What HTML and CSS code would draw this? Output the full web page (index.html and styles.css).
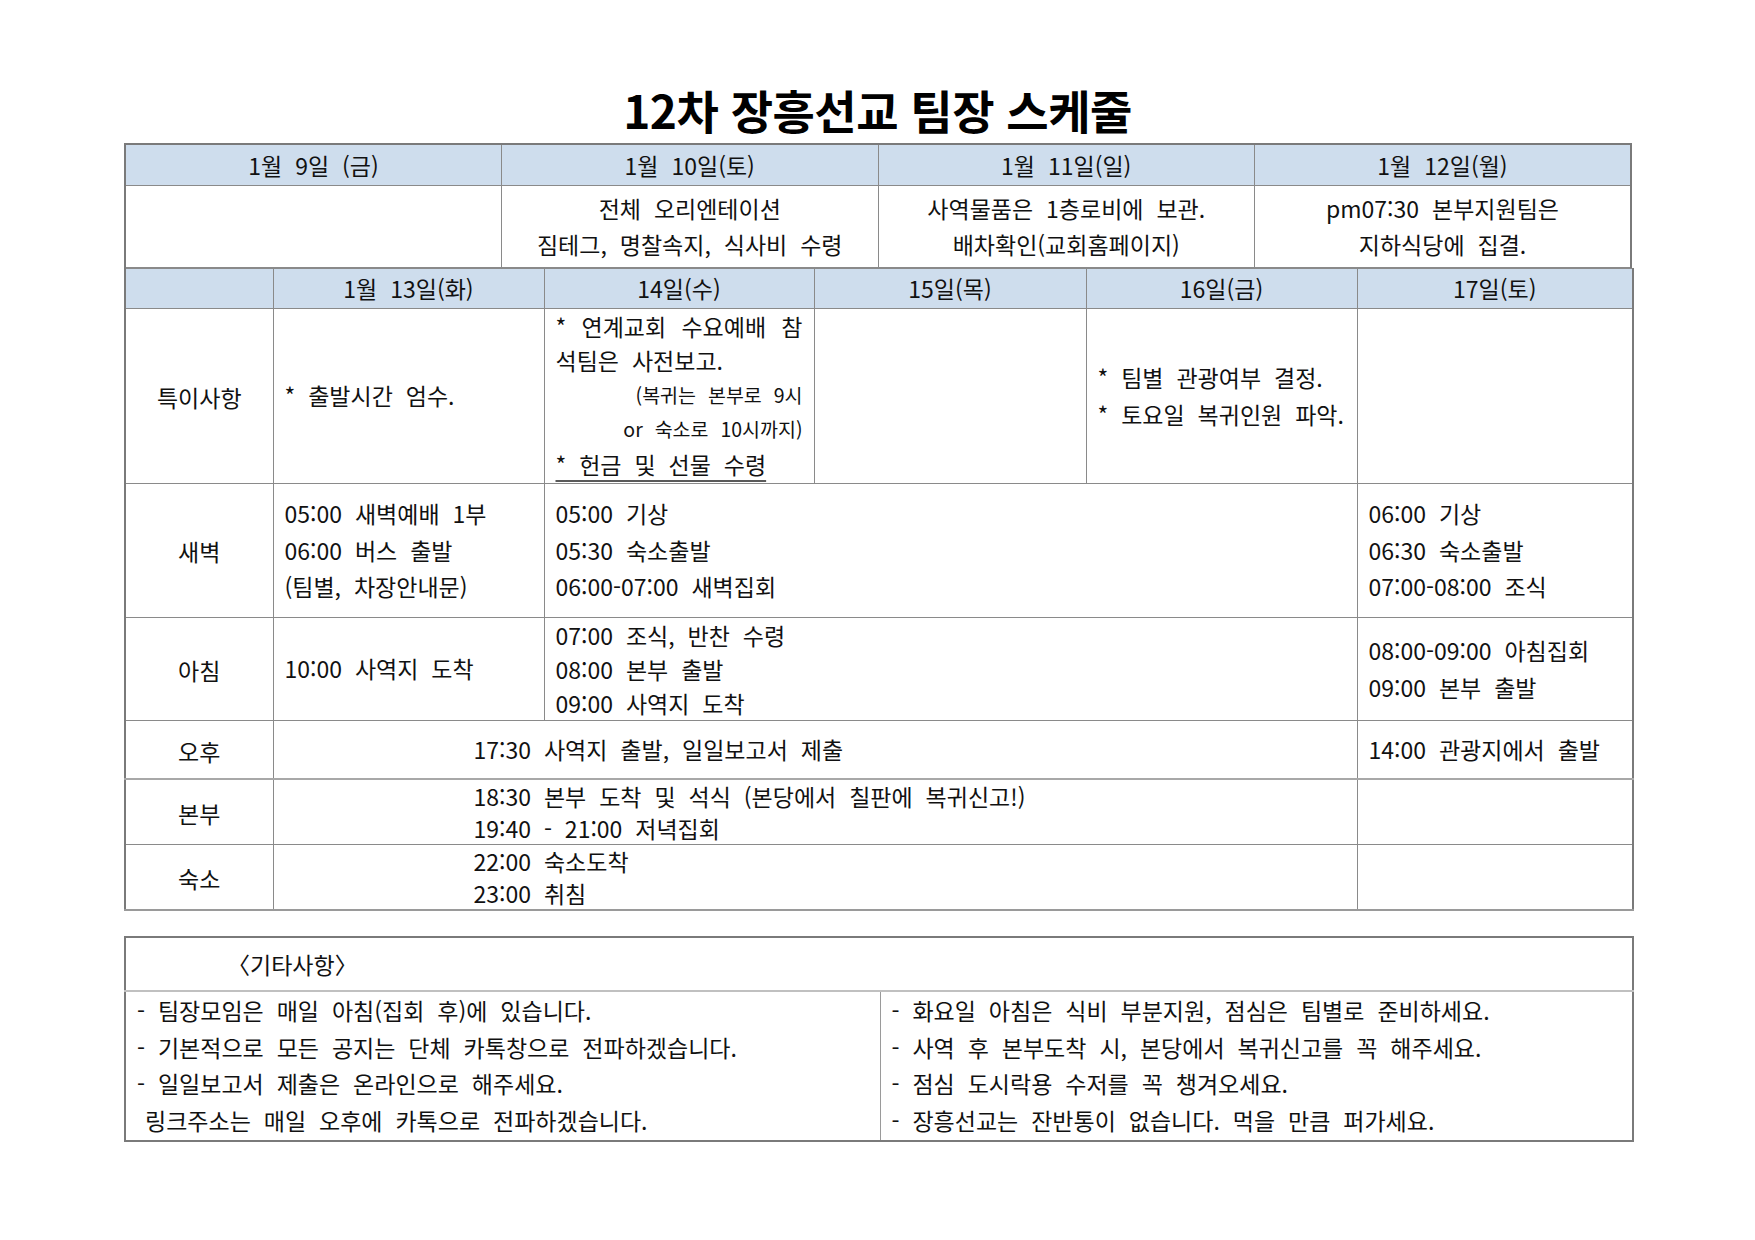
FILE: index.html
```html
<!DOCTYPE html>
<html lang="ko">
<head>
<meta charset="utf-8">
<title>12차 장흥선교 팀장 스케줄</title>
<link rel="stylesheet" href="styles.css">
</head>
<body>
<div class="page">
  <h1 class="title">12차 장흥선교 팀장 스케줄</h1>

  <div class="sheet">
    <table class="grid top">
      <colgroup><col><col><col><col></colgroup>
      <tr class="head r-h1">
        <td>1월 9일 (금)</td>
        <td>1월 10일(토)</td>
        <td>1월 11일(일)</td>
        <td>1월 12일(월)</td>
      </tr>
      <tr class="r-info">
        <td></td>
        <td class="center">전체 오리엔테이션<br>짐테그, 명찰속지, 식사비 수령</td>
        <td class="center">사역물품은 1층로비에 보관.<br>배차확인(교회홈페이지)</td>
        <td class="center">pm07:30 본부지원팀은<br>지하식당에 집결.</td>
      </tr>
    </table>

    <table class="grid main">
      <colgroup>
        <col class="c-label"><col class="c-13"><col class="c-14"><col class="c-15"><col class="c-16"><col class="c-17">
      </colgroup>
      <tr class="head r-h2">
        <td></td>
        <td>1월 13일(화)</td>
        <td>14일(수)</td>
        <td>15일(목)</td>
        <td>16일(금)</td>
        <td>17일(토)</td>
      </tr>
      <tr class="r-note">
        <td class="label">특이사항</td>
        <td>* 출발시간 엄수.</td>
        <td class="tight top-align">
          <div class="just">* 연계교회 수요예배 참</div>
          <div>석팀은 사전보고.</div>
          <div class="small right">(복귀는 본부로 9시</div>
          <div class="small right">or 숙소로 10시까지)</div>
          <div><span class="uline">* 헌금 및 선물 수령</span></div>
        </td>
        <td></td>
        <td>* 팀별 관광여부 결정.<br>* 토요일 복귀인원 파악.</td>
        <td></td>
      </tr>
      <tr class="r-dawn">
        <td class="label">새벽</td>
        <td>05:00 새벽예배 1부<br>06:00 버스 출발<br>(팀별, 차장안내문)</td>
        <td colspan="3">05:00 기상<br>05:30 숙소출발<br>06:00-07:00 새벽집회</td>
        <td>06:00 기상<br>06:30 숙소출발<br>07:00-08:00 조식</td>
      </tr>
      <tr class="r-morning">
        <td class="label">아침</td>
        <td>10:00 사역지 도착</td>
        <td colspan="3" class="mid">07:00 조식, 반찬 수령<br>08:00 본부 출발<br>09:00 사역지 도착</td>
        <td>08:00-09:00 아침집회<br>09:00 본부 출발</td>
      </tr>
      <tr class="r-pm strong-bottom">
        <td class="label">오후</td>
        <td colspan="4" class="indent">17:30 사역지 출발, 일일보고서 제출</td>
        <td>14:00 관광지에서 출발</td>
      </tr>
      <tr class="r-hq">
        <td class="label">본부</td>
        <td colspan="4" class="indent pair">18:30 본부 도착 및 석식 (본당에서 칠판에 복귀신고!)<br>19:40 - 21:00 저녁집회</td>
        <td></td>
      </tr>
      <tr class="r-lodge">
        <td class="label">숙소</td>
        <td colspan="4" class="indent pair">22:00 숙소도착<br>23:00 취침</td>
        <td></td>
      </tr>
    </table>
  </div>

  <table class="notes">
    <colgroup><col class="n-left"><col class="n-right"></colgroup>
    <tr class="n-head">
      <td colspan="2"><span class="n-title">〈기타사항〉</span></td>
    </tr>
    <tr class="n-body">
      <td>
        <div>- 팀장모임은 매일 아침(집회 후)에 있습니다.</div>
        <div>- 기본적으로 모든 공지는 단체 카톡창으로 전파하겠습니다.</div>
        <div>- 일일보고서 제출은 온라인으로 해주세요.</div>
        <div class="cont">링크주소는 매일 오후에 카톡으로 전파하겠습니다.</div>
      </td>
      <td>
        <div>- 화요일 아침은 식비 부분지원, 점심은 팀별로 준비하세요.</div>
        <div>- 사역 후 본부도착 시, 본당에서 복귀신고를 꼭 해주세요.</div>
        <div>- 점심 도시락용 수저를 꼭 챙겨오세요.</div>
        <div>- 장흥선교는 잔반통이 없습니다. 먹을 만큼 퍼가세요.</div>
      </td>
    </tr>
  </table>
</div>
</body>
</html>
```

FILE: styles.css
```css
html, body {
  margin: 0;
  padding: 0;
  background: #ffffff;
}

body {
  font-family: "Noto Sans CJK KR", "Noto Sans", sans-serif;
  color: #111111;
}

.page {
  width: 1755px;
  padding-top: 84px;
}

.title {
  margin: 0;
  font-size: 46px;
  font-weight: 700;
  line-height: 50px;
  letter-spacing: -0.5px;
  text-align: center;
  color: #000000;
}

.sheet {
  margin: 9px 0 0 124px;
  width: 1508px;
}

.grid {
  width: 1508px;
  border-collapse: collapse;
  table-layout: fixed;
  border: 2px solid #7a7a7a;
  font-size: 23px;
  word-spacing: 6.5px;
  line-height: 36.5px;
}

.grid.top {
  border-bottom: none;
}

.grid.main {
  border-top: none;
  border-bottom-color: #9a9a9a;
}

.grid td {
  border: 1px solid #8a8a8a;
  padding: 0 11px;
  vertical-align: middle;
  text-align: left;
  white-space: nowrap;
}

.grid .head td {
  background: #cedded;
  text-align: center;
}

.grid .center {
  text-align: center;
}

.strong-bottom td {
  border-bottom: 2px solid #a8a8a8;
}

.r-h1 { height: 41px; }
.r-info { height: 82px; }
.r-h2 { height: 40px; }
.r-note { height: 175px; }
.r-dawn { height: 134px; }
.r-morning { height: 102px; }
.r-pm { height: 59px; }
.r-hq { height: 63px; }
.r-lodge { height: 65px; }

.c-label { width: 148px; }
.c-13 { width: 271px; }
.c-14 { width: 270px; }
.c-15 { width: 272px; }
.c-16 { width: 271px; }
.c-17 { width: 276px; }

.grid td.label {
  text-align: center;
  padding: 3px 0 0 0;
}

.grid td.tight {
  line-height: 34.5px;
  white-space: normal;
}

.grid td.top-align {
  vertical-align: top;
  padding-top: 0;
}

.just {
  text-align: justify;
  text-align-last: justify;
}

.small {
  font-size: 19.5px;
}

.right {
  text-align: right;
}

.uline {
  text-decoration: underline;
  text-decoration-color: #5a5a5a;
  text-decoration-thickness: 2px;
  text-underline-offset: 6px;
}

.grid td.mid {
  line-height: 34px;
}

.grid td.indent {
  padding-left: 200px;
}

.grid td.pair {
  line-height: 32px;
}

/* notes box */
.notes {
  margin: 25px 0 0 124px;
  width: 1508px;
  border-collapse: collapse;
  table-layout: fixed;
  border: 2px solid #7a7a7a;
  font-size: 23px;
  word-spacing: 6.5px;
  line-height: 36.5px;
}

.n-left { width: 755px; }
.n-right { width: 753px; }

.notes td {
  padding: 0 11px;
  vertical-align: top;
  white-space: nowrap;
  border-left: 1px solid #9a9a9a;
}

.n-head td {
  height: 52px;
  vertical-align: middle;
  border-bottom: 2px solid #c0c0c0;
}

.n-title {
  padding-left: 90px;
}

.n-body td {
  height: 148px;
  padding-top: 0;
}

.notes .cont {
  padding-left: 8px;
}
```
